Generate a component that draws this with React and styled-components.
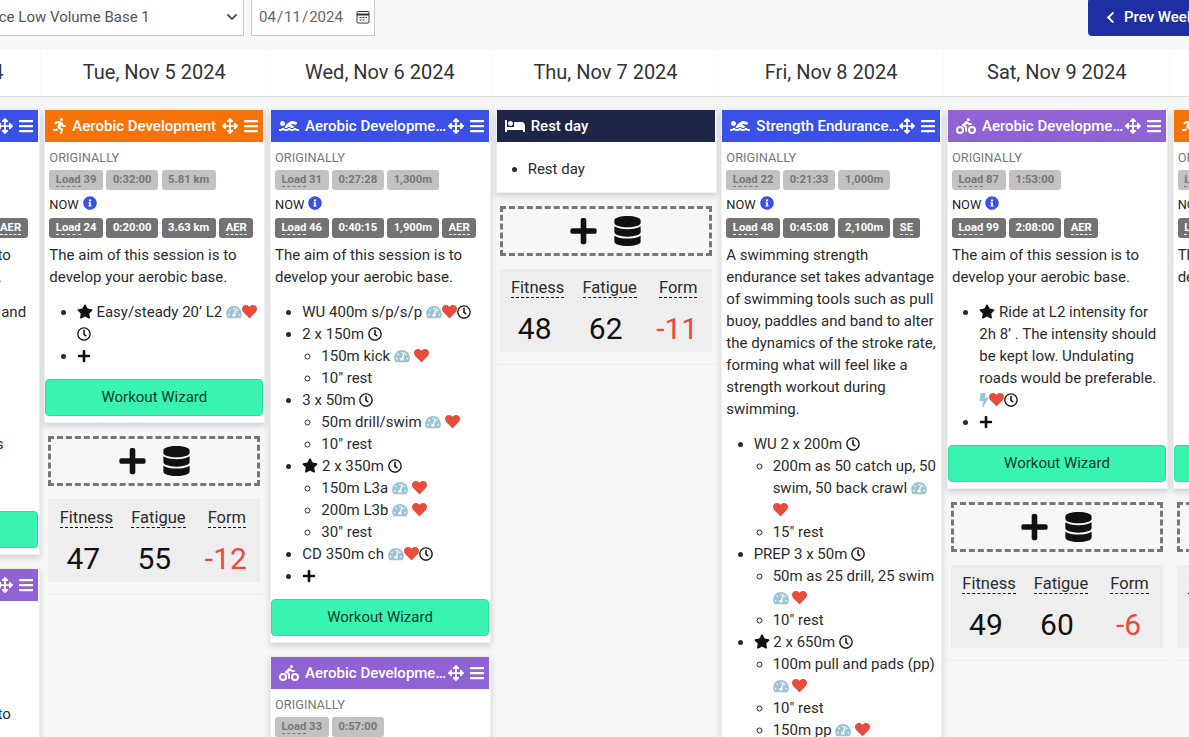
import styled, { createGlobalStyle } from "styled-components";
import {
  FaArrowsAlt,
  FaBars,
  FaBed,
  FaBiking,
  FaBolt,
  FaChevronDown,
  FaChevronLeft,
  FaDatabase,
  FaHeart,
  FaInfoCircle,
  FaPlus,
  FaRegClock,
  FaRunning,
  FaStar,
  FaSwimmer,
  FaTachometerAlt,
} from "react-icons/fa";

const AIM = "The aim of this session is to develop your aerobic base.";

const sport = {
  run: { color: "#f5730a", Icon: FaRunning, width: 13 },
  swim: { color: "#3a50e6", Icon: FaSwimmer, width: 20 },
  bike: { color: "#8f63d3", Icon: FaBiking, width: 20 },
};

const columns = [
  {
    date: "Mon, Nov 4 2024",
    sessions: [
      {
        sport: "swim",
        title: "Aerobic Development",
        before: ["39", "0:32:00", "5.81 km"],
        now: ["24", "0:20:00", "3.63 km", "AER"],
        text: AIM,
        items: [
          { text: "Warm up at 9 minutes and then relax" },
          { text: "Main set" },
          { text: "Steady" },
          { text: "Form" },
          { text: "Drills" },
          { text: "Finish with nice strides" },
          { text: "Cool down" },
          { plus: true },
        ],
      },
      {
        sport: "bike",
        title: "Aerobic Development",
        before: ["33", "0:57:00"],
        now: ["33", "0:57:00", "AER"],
        text: AIM,
        items: [{ plus: true }],
      },
    ],
  },
  {
    date: "Tue, Nov 5 2024",
    sessions: [
      {
        sport: "run",
        title: "Aerobic Development",
        before: ["39", "0:32:00", "5.81 km"],
        now: ["24", "0:20:00", "3.63 km", "AER"],
        text: AIM,
        items: [{ star: true, text: "Easy/steady 20’ L2", icons: "ghc" }, { plus: true }],
      },
    ],
    stats: [47, 55, -12],
  },
  {
    date: "Wed, Nov 6 2024",
    sessions: [
      {
        sport: "swim",
        title: "Aerobic Development",
        before: ["31", "0:27:28", "1,300m"],
        now: ["46", "0:40:15", "1,900m", "AER"],
        text: AIM,
        items: [
          { text: "WU 400m s/p/s/p", icons: "ghc" },
          {
            text: "2 x 150m",
            icons: "c",
            children: [{ text: "150m kick", icons: "gh", spaced: true }, { text: "10″ rest" }],
          },
          {
            text: "3 x 50m",
            icons: "c",
            children: [{ text: "50m drill/swim", icons: "gh", spaced: true }, { text: "10″ rest" }],
          },
          {
            star: true,
            text: "2 x 350m",
            icons: "c",
            children: [
              { text: "150m L3a", icons: "gh", spaced: true },
              { text: "200m L3b", icons: "gh", spaced: true },
              { text: "30″ rest" },
            ],
          },
          { text: "CD 350m ch", icons: "ghc" },
          { plus: true },
        ],
      },
      {
        sport: "bike",
        title: "Aerobic Development",
        before: ["33", "0:57:00"],
        now: ["33", "0:57:00", "AER"],
        text: AIM,
        items: [{ plus: true }],
      },
    ],
  },
  {
    date: "Thu, Nov 7 2024",
    rest: true,
    stats: [48, 62, -11],
  },
  {
    date: "Fri, Nov 8 2024",
    sessions: [
      {
        sport: "swim",
        title: "Strength Endurance Swim",
        before: ["22", "0:21:33", "1,000m"],
        now: ["48", "0:45:08", "2,100m", "SE"],
        text: "A swimming strength endurance set takes advantage of swimming tools such as pull buoy, paddles and band to alter the dynamics of the stroke rate, forming what will feel like a strength workout during swimming.",
        items: [
          {
            text: "WU 2 x 200m",
            icons: "c",
            children: [
              { text: "200m as 50 catch up, 50 swim, 50 back crawl", icons: "gh", spaced: true },
              { text: "15″ rest" },
            ],
          },
          {
            text: "PREP 3 x 50m",
            icons: "c",
            children: [
              { text: "50m as 25 drill, 25 swim", icons: "gh", spaced: true },
              { text: "10″ rest" },
            ],
          },
          {
            star: true,
            text: "2 x 650m",
            icons: "c",
            children: [
              { text: "100m pull and pads (pp)", icons: "gh", spaced: true },
              { text: "10″ rest" },
              { text: "150m pp", icons: "gh", spaced: true },
            ],
          },
        ],
      },
    ],
  },
  {
    date: "Sat, Nov 9 2024",
    sessions: [
      {
        sport: "bike",
        title: "Aerobic Development",
        before: ["87", "1:53:00"],
        now: ["99", "2:08:00", "AER"],
        text: AIM,
        items: [
          {
            star: true,
            text: "Ride at L2 intensity for 2h 8’ . The intensity should be kept low. Undulating roads would be preferable.",
            icons: "bhc",
          },
          { plus: true },
        ],
      },
    ],
    stats: [49, 60, -6],
  },
  {
    date: "Sun, Nov 10 2024",
    sessions: [
      {
        sport: "run",
        title: "Aerobic Development",
        before: ["39", "0:32:00", "5.81 km"],
        now: ["24", "0:20:00", "3.63 km", "AER"],
        text: AIM,
        items: [
          { text: "Easy/steady run at L2 intensity, keep the effort low and relaxed throughout the whole session with good form" },
          { plus: true },
        ],
      },
    ],
    stats: [49, 57, -8],
  },
];

function StepIcons({ icons, spaced }) {
  const map = { g: Gauge, h: Heart, c: Clock, b: Bolt };
  return (
    <>
      {icons.split("").map((key, index) => {
        const Glyph = map[key];
        return (
          <span key={index}>
            {(spaced || index === 0) && " "}
            <Glyph />
          </span>
        );
      })}
    </>
  );
}

function Steps({ items, nested }) {
  const List = nested ? SubList : StepList;
  return (
    <List>
      {items.map((item, index) => (
        <li key={index}>
          {item.plus && <SmallPlus />}
          {item.star && <Star />}
          {item.star && " "}
          {item.text}
          {item.icons && <StepIcons icons={item.icons} spaced={item.spaced} />}
          {item.children && <Steps items={item.children} nested />}
        </li>
      ))}
    </List>
  );
}

function Badges({ values, faded }) {
  return (
    <BadgeRow>
      {values.map((value, index) => {
        if (index === 0) {
          return (
            <Badge key={index} $faded={faded}>
              <Abbr>Load</Abbr> {value}
            </Badge>
          );
        }
        const isZone = value === "AER" || value === "SE";
        return (
          <Badge key={index} $faded={faded}>
            {isZone ? <Abbr>{value}</Abbr> : value}
          </Badge>
        );
      })}
    </BadgeRow>
  );
}

function Session({ session }) {
  const { color, Icon, width } = sport[session.sport];
  return (
    <Card>
      <CardHeader $color={color}>
        <SportGlyph $width={width}>
          <Icon />
        </SportGlyph>
        <CardTitle>{session.title}</CardTitle>
        <MoveIcon />
        <MenuIcon />
      </CardHeader>
      <CardBody>
        <Originally>ORIGINALLY</Originally>
        <Badges values={session.before} faded />
        <NowLabel>
          NOW <InfoIcon />
        </NowLabel>
        <Badges values={session.now} />
        <Description>{session.text}</Description>
        <Steps items={session.items} />
      </CardBody>
      <WizardButton type="button">Workout Wizard</WizardButton>
    </Card>
  );
}

function RestCard() {
  return (
    <Card>
      <CardHeader $color="#1f2547">
        <SportGlyph $width={20}>
          <FaBed />
        </SportGlyph>
        <CardTitle>Rest day</CardTitle>
      </CardHeader>
      <RestBody>
        <li>Rest day</li>
      </RestBody>
    </Card>
  );
}

function Summary({ stats }) {
  const [fitness, fatigue, form] = stats;
  return (
    <>
      <AddBox>
        <FaPlus />
        <FaDatabase />
      </AddBox>
      <StatsBox>
        <StatLabels>
          <StatLabel><span>Fitness</span></StatLabel>
          <StatLabel><span>Fatigue</span></StatLabel>
          <StatLabel><span>Form</span></StatLabel>
        </StatLabels>
        <StatValues>
          <StatValue>{fitness}</StatValue>
          <StatValue>{fatigue}</StatValue>
          <StatValue $red={form < 0}>{form}</StatValue>
        </StatValues>
      </StatsBox>
    </>
  );
}

export default function App() {
  return (
    <Viewport>
      <GlobalStyle />
      <Page>
        <Toolbar>
          <PlanSelect>
            <span>Endurance Low Volume Base 1</span>
            <FaChevronDown size={12} />
          </PlanSelect>
          <DateBox>
            <DateField type="date" defaultValue="2024-04-11" />
            <svg width="14" height="14" viewBox="0 0 14 14" fill="none" stroke="#333">
              <rect x="1" y="1.5" width="12" height="11.5" rx="1" />
              <path d="M1 4.5h12" strokeWidth="2" />
              <path d="M3.5 7.5h2M6.5 7.5h2M9.5 7.5h1.5M3.5 10h2M6.5 10h2" />
            </svg>
          </DateBox>
          <PrevButton type="button">
            <FaChevronLeft size={13} />
            Prev Week
          </PrevButton>
        </Toolbar>
        <Dates>
          {columns.map((column) => (
            <DateCell key={column.date}>{column.date}</DateCell>
          ))}
        </Dates>
        <Board>
          {columns.map((column) => (
            <Column key={column.date}>
              <ColumnInner>
                {column.rest && <RestCard />}
                {column.sessions &&
                  column.sessions.map((session, index) => <Session key={index} session={session} />)}
                {column.stats && <Summary stats={column.stats} />}
              </ColumnInner>
            </Column>
          ))}
        </Board>
      </Page>
    </Viewport>
  );
}

const GlobalStyle = createGlobalStyle`
  html, body {
    margin: 0;
    padding: 0;
    background: #f7f7f7;
  }
  body {
    font-family: Roboto, "Liberation Sans", sans-serif;
    font-size: 15px;
    line-height: 22px;
    color: #2b2b2b;
  }
`;

const Viewport = styled.div`
  width: 1189px;
  height: 737px;
  overflow: hidden;
`;
const Page = styled.div`
  width: 1800px;
  margin: -2px 0 0 -184.3px;
`;
const Toolbar = styled.div`
  display: flex;
  align-items: stretch;
  height: 38px;
  margin-bottom: 14px;
`;
const PlanSelect = styled.div`
  box-sizing: border-box;
  width: 313px;
  margin-left: 115.3px;
  display: flex;
  align-items: center;
  justify-content: space-between;
  padding: 0 5px 0 12px;
  background: #fff;
  border: 1px solid #c9c9c9;
  color: #555;
  font-size: 15px;
`;
const DateBox = styled.div`
  box-sizing: border-box;
  width: 124px;
  margin-left: 7px;
  display: flex;
  align-items: center;
  justify-content: space-between;
  padding: 0 4px 0 6px;
  background: #fff;
  border: 1px solid #c9c9c9;
`;
const DateField = styled.input`
  width: 90px;
  padding: 0;
  background: none;
  border: 0;
  color: #666;
  font-family: Roboto, sans-serif;
  font-size: 15px;
  &::-webkit-calendar-picker-indicator {
    display: none;
  }
`;
const PrevButton = styled.button`
  width: 150px;
  margin-left: 713px;
  display: flex;
  align-items: center;
  gap: 7px;
  padding: 0 0 0 16px;
  background: #1e2fa3;
  border: 0;
  border-radius: 4px;
  color: #fff;
  font-family: Roboto, sans-serif;
  font-size: 15px;
  font-weight: 500;
  white-space: nowrap;
`;
const Dates = styled.div`
  display: flex;
  height: 46px;
  background: #fff;
  border-bottom: 1px solid #ddd;
`;
const DateCell = styled.div`
  flex: 0 0 225.67px;
  box-sizing: border-box;
  padding-left: 1px;
  border-right: 1px solid #fafafa;
  text-align: center;
  font-size: 20px;
  line-height: 44px;
  color: #333;
`;
const Board = styled.div`
  display: flex;
  align-items: flex-start;
`;
const Column = styled.div`
  flex: 0 0 225.67px;
  min-width: 0;
  box-sizing: border-box;
  padding: 0 1.67px 0 3px;
`;
const ColumnInner = styled.div`
  display: flex;
  flex-direction: column;
  gap: 13px;
  padding: 12px 0;
  border-bottom: 1px solid #eee;
`;
const Card = styled.div`
  min-width: 0;
  background: #fff;
  border: 1px solid #f0f0f0;
  box-shadow: 0 3px 6px rgba(60, 70, 90, 0.22);
  padding-bottom: 6px;
`;
const CardHeader = styled.div`
  display: flex;
  align-items: center;
  height: 32px;
  margin-right: 1px;
  padding: 0 5px 0 8px;
  background: ${(props) => props.$color};
  color: #fff;
  svg {
    flex: none;
  }
`;
const SportGlyph = styled.span`
  display: flex;
  flex: none;
  svg {
    width: ${(props) => props.$width}px;
    height: 16px;
  }
`;
const CardTitle = styled.div`
  flex: 1;
  min-width: 0;
  margin-left: 6px;
  overflow: hidden;
  white-space: nowrap;
  text-overflow: ellipsis;
  font-size: 15px;
  font-weight: 500;
`;
const MoveIcon = styled(FaArrowsAlt)`
  width: 16px;
  height: 16px;
`;
const MenuIcon = styled(FaBars)`
  width: 14px;
  height: 16px;
  margin-left: 6px;
`;
const CardBody = styled.div`
  padding: 9px 4px 0;
`;
const Originally = styled.div`
  font-size: 12.8px;
  line-height: 14px;
  color: #777;
`;
const BadgeRow = styled.div`
  display: flex;
  gap: 3.5px;
  margin-top: 5px;
`;
const Badge = styled.span`
  display: block;
  padding: 0 6.5px;
  height: 20px;
  line-height: 19px;
  border-radius: 3px;
  background: ${(props) => (props.$faded ? "#c2c2c2" : "#737373")};
  color: ${(props) => (props.$faded ? "#777" : "#fff")};
  font-size: 11.25px;
  font-weight: 700;
  white-space: nowrap;
`;
const Abbr = styled.span`
  border-bottom: 1px dashed currentColor;
`;
const NowLabel = styled.div`
  height: 20px;
  margin-top: 5px;
  margin-bottom: -2px;
  font-size: 12.8px;
  line-height: 20px;
  color: #222;
`;
const InfoIcon = styled(FaInfoCircle)`
  width: 14px;
  height: 14px;
  margin-left: 1px;
  color: #3a50e6;
  vertical-align: -1px;
`;
const Description = styled.p`
  margin: 6px 0 13px;
`;
const StepList = styled.ul`
  margin: 0;
  padding-left: 27.3px;
  list-style: disc;
`;
const SubList = styled.ul`
  margin: 0;
  padding-left: 19px;
  list-style: circle;
`;
const RestBody = styled(StepList)`
  margin: 16px 0 6px;
  padding-left: 31px;
`;
const Star = styled(FaStar)`
  width: 16px;
  height: 15px;
  color: #111;
  vertical-align: -2px;
`;
const Gauge = styled(FaTachometerAlt)`
  width: 16px;
  height: 14px;
  color: #9cc4d6;
  vertical-align: -2px;
`;
const Bolt = styled(FaBolt)`
  width: 10px;
  height: 14px;
  color: #9cc4d6;
  vertical-align: -2px;
`;
const Heart = styled(FaHeart)`
  width: 15px;
  height: 15px;
  color: #e74c3c;
  vertical-align: -2px;
`;
const Clock = styled(FaRegClock)`
  width: 14px;
  height: 14px;
  color: #111;
  vertical-align: -2px;
`;
const SmallPlus = styled(FaPlus)`
  width: 14px;
  height: 14px;
  color: #111;
  vertical-align: -2px;
`;
const WizardButton = styled.button`
  display: block;
  box-sizing: border-box;
  width: calc(100% - 1px);
  height: 37px;
  margin-top: 12px;
  padding: 0 0 2px;
  background: #38f4b0;
  border: 1px solid #2fdca0;
  border-radius: 4px;
  color: #0f3a2b;
  font-family: Roboto, sans-serif;
  font-size: 15px;
`;
const AddBox = styled.div`
  box-sizing: border-box;
  height: 50px;
  margin: 0 5px 0 4px;
  display: flex;
  align-items: center;
  justify-content: center;
  gap: 17px;
  border: 3px dashed #777;
  color: #111;
  svg {
    width: 27px;
    height: 30px;
  }
`;
const StatsBox = styled.div`
  box-sizing: border-box;
  height: 83px;
  margin: 0 5px 0 4px;
  padding-top: 8px;
  background: #eee;
`;
const StatLabels = styled.div`
  display: grid;
  grid-template-columns: 76px 68px 69px;
`;
const StatLabel = styled.div`
  text-align: center;
  font-size: 16.5px;
  line-height: 22px;
  span {
    border-bottom: 1px dashed #111;
  }
`;
const StatValues = styled.div`
  display: grid;
  grid-template-columns: 70px 72px 71px;
  margin-top: 8px;
`;
const StatValue = styled.div`
  text-align: center;
  font-size: 30px;
  line-height: 44px;
  color: ${(props) => (props.$red ? "#e74c3c" : "#111")};
`;
